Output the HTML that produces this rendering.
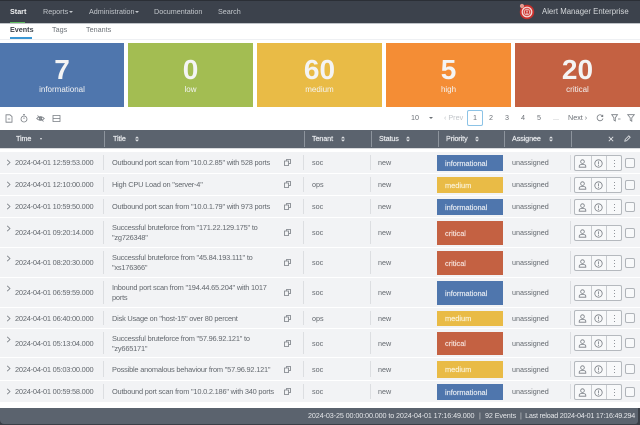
<!DOCTYPE html>
<html><head><meta charset="utf-8"><style>
*{box-sizing:border-box}
html,body{margin:0;padding:0;width:640px;height:425px;overflow:hidden;background:#fff;font-family:"Liberation Sans",sans-serif}
.a{position:absolute;white-space:nowrap}
#nav{left:0;top:0;width:640px;height:23px;background:#3c424c;border-top:1px solid #2b2f36}
.n{top:7px;font-size:7.2px;line-height:9px;color:#c3c7cc}
.t{top:25px;font-size:7.2px;line-height:10px;color:#6d7278}
.tile{top:43px;height:64px;color:#f4f4f4;text-align:center}
.tile b{position:absolute;left:0;right:0;top:12px;font-size:28px;line-height:30px;font-weight:bold}
.tile span{position:absolute;left:0;right:0;top:42px;font-size:8px;line-height:10px}
.p{top:113px;font-size:7.2px;line-height:10px;color:#6c7177}
.h{top:134px;font-size:7.2px;line-height:10px;color:#e9ebee;letter-spacing:-.1px;-webkit-text-stroke:.2px #e9ebee}
.hd{top:131px;width:1px;height:16px;background:#8d949d}
.r{position:absolute;left:0;width:640px;background:#f2f3f5;font-size:7.4px;color:#63686e}
.c{position:absolute;top:1px;bottom:0;display:flex;align-items:center;line-height:10px;white-space:nowrap;letter-spacing:-.2px}
.c:nth-child(n+7){font-size:7.2px;letter-spacing:0}
.d{position:absolute;top:3px;bottom:3px;width:1px;background:#dcdee1}
.pr{position:absolute;left:437px;width:66px;top:3px;bottom:2px;color:#e6ebf2;display:flex;align-items:center;padding-left:8px;font-size:7.4px;-webkit-text-stroke:.15px currentColor}
.inf{background:#4f76ad}.med{background:#e9bb46;color:#fbf3da}.cri{background:#c46142;color:#f6e3dc}
.btn{position:absolute;left:574px;width:48px;height:16px;top:50%;margin-top:-8px;border:1px solid #b5b9be;border-radius:2px;background:#f8f9fa}
.btn i{position:absolute;top:0;bottom:0;width:1px;background:#c8cbcf}
.btn svg{position:absolute;top:3px;width:9px;height:9px}
.cb{position:absolute;left:625px;width:10px;height:10px;top:50%;margin-top:-5px;border:1px solid #b0b4b9;border-radius:2px;background:#f8f9fa}
.ch{position:absolute;left:6px;width:5px;height:7px}
.cp{position:absolute;left:284px;width:7px;height:7px;top:50%;margin-top:-3.5px}
svg{display:block;overflow:visible;fill:none;stroke:#777c82;stroke-width:.8}
</style></head><body>
<svg width="0" height="0" style="position:absolute"><defs>
<symbol id="chev" viewBox="0 0 5 7"><path d="M1.2 .8 4 3.5 1.2 6.2"/></symbol>
<symbol id="copy" viewBox="0 0 7 7"><path d="M2.5 1.5V.5H6.5V4.5H5M.5 2H4.5V6.5H.5Z"/></symbol>
<symbol id="user" viewBox="0 0 9 9"><circle cx="4.5" cy="2.6" r="1.8"/><path d="M1.2 8.2V7.2Q1.2 5.8 3 5.6H6Q7.8 5.8 7.8 7.2V8.2Z"/></symbol>
<symbol id="info" viewBox="0 0 9 9"><circle cx="4.5" cy="4.5" r="3.7"/><path d="M4.5 2.4V5.4M4.5 6V6.9"/></symbol>
<symbol id="dots" viewBox="0 0 9 9"><path d="M4.5 1V2M4.5 4V5M4.5 7V8"/></symbol>
</defs></svg>

<div class="a" id="nav"></div>
<div class="a" style="left:0;top:23px;width:640px;height:1px;background:#bfc3c8"></div>
<div class="a n" style="left:10px;color:#f2f3f4;font-weight:bold">Start</div>
<div class="a" style="left:10px;top:22px;width:15px;height:1px;background:#5cb85c"></div>
<div class="a n" style="left:43px">Reports</div><div class="a" style="left:69px;top:11px;border:2px solid transparent;border-top:2.5px solid #c3c7cc;border-bottom:0"></div>
<div class="a n" style="left:89px">Administration</div><div class="a" style="left:135px;top:11px;border:2px solid transparent;border-top:2.5px solid #c3c7cc;border-bottom:0"></div>
<div class="a n" style="left:154px">Documentation</div>
<div class="a n" style="left:218px">Search</div>
<svg class="a" style="left:519px;top:4px;stroke:none" width="16" height="16" viewBox="0 0 16 16"><circle cx="8" cy="8" r="7.2" fill="#c9302c"/><circle cx="8" cy="8" r="5.4" fill="#f4dcda"/><circle cx="8" cy="8" r="4.2" fill="#d9534f"/><circle cx="8" cy="8" r="3" fill="#f4dcda"/><circle cx="8" cy="8" r="2.3" fill="#c9302c"/><rect x="7.5" y="6.4" width="1" height="2.2" fill="#fff"/><rect x="7.5" y="9" width="1" height=".9" fill="#fff"/><circle cx="3" cy="2" r="2.1" fill="#e39a90"/></svg>
<div class="a n" style="left:542px;top:7px;font-size:7.8px;color:#d6d9dc">Alert Manager Enterprise</div>

<div class="a t" style="left:10px;color:#3e444c;font-weight:bold">Events</div>
<div class="a" style="left:10px;top:37px;width:22px;height:2px;background:#3a97d4"></div>
<div class="a t" style="left:52px">Tags</div>
<div class="a t" style="left:86px">Tenants</div>
<div class="a" style="left:0;top:39px;width:640px;height:1px;background:#eef0f3"></div>

<div class="a tile" style="left:0;width:124px;background:#4f76ad"><b>7</b><span>informational</span></div>
<div class="a tile" style="left:128px;width:125px;background:#a3bd52"><b>0</b><span>low</span></div>
<div class="a tile" style="left:257px;width:125px;background:#e9bb46"><b>60</b><span>medium</span></div>
<div class="a tile" style="left:386px;width:125px;background:#f48d35"><b>5</b><span>high</span></div>
<div class="a tile" style="left:515px;width:125px;background:#c46142"><b>20</b><span>critical</span></div>

<svg class="a" style="left:5px;top:114px" width="8" height="9" viewBox="0 0 8 9"><path d="M1 .8H5L7 2.6V8.2H1ZM2.8 5H5.2"/></svg>
<svg class="a" style="left:20px;top:114px" width="8" height="9" viewBox="0 0 8 9"><circle cx="4" cy="5" r="3"/><path d="M4 3.5V5M3 .7H5"/></svg>
<svg class="a" style="left:36px;top:114px" width="9" height="9" viewBox="0 0 9 9"><path d="M.7 4.5Q4.5 .8 8.3 4.5 4.5 8.2 .7 4.5ZM1.5 1.5 7.5 7.5"/><circle cx="4.5" cy="4.5" r="1.2"/></svg>
<svg class="a" style="left:52px;top:114px" width="9" height="9" viewBox="0 0 9 9"><path d="M1 1.5H8V7.5H1ZM1 4.5H8"/></svg>

<div class="a p" style="left:411px">10</div>
<div class="a" style="left:429px;top:117px;border:2px solid transparent;border-top:2.5px solid #6c7177;border-bottom:0"></div>
<div class="a p" style="left:444px;color:#c0c4c8">‹ Prev</div>
<div class="a" style="left:467px;top:110px;width:16px;height:16px;border:1px solid #8cc3e6;border-radius:2px"></div>
<div class="a p" style="left:473px">1</div>
<div class="a p" style="left:489px">2</div>
<div class="a p" style="left:505px">3</div>
<div class="a p" style="left:521px">4</div>
<div class="a p" style="left:537px">5</div>
<div class="a p" style="left:553px;color:#a4a8ad">...</div>
<div class="a p" style="left:568px">Next ›</div>
<svg class="a" style="left:596px;top:114px" width="8" height="8" viewBox="0 0 8 8"><path d="M6.8 2.5A3 3 0 1 0 7 4.5M6.8 .8V2.6H5"/></svg>
<svg class="a" style="left:611px;top:114px" width="10" height="8" viewBox="0 0 10 8"><path d="M.7 .7H6.5L4.3 3.8V7L2.9 6V3.8ZM7 5H9.5"/></svg>
<svg class="a" style="left:627px;top:114px" width="8" height="8" viewBox="0 0 8 8"><path d="M.7 .7H7.3L4.8 3.8V7.3L3.2 6.2V3.8Z"/></svg>

<div class="a" style="left:0;top:130px;width:640px;height:18px;background:#5b636e"></div>
<div class="a" style="left:0;top:148px;width:640px;height:1px;background:#d9dbde"></div>
<div class="a h" style="left:16px">Time</div><div class="a" style="left:40px;top:138px;border:1.5px solid transparent;border-top:2px solid #e4e6e9;border-bottom:0"></div>
<div class="a h" style="left:113px">Title</div>
<div class="a h" style="left:312px">Tenant</div>
<div class="a h" style="left:379px">Status</div>
<div class="a h" style="left:446px">Priority</div>
<div class="a h" style="left:512px">Assignee</div>
<svg class="a" style="left:135px;top:136px" width="4" height="6" viewBox="0 0 4 6"><path d="M0 2.4 2 .4 4 2.4ZM0 3.6 2 5.6 4 3.6Z" fill="#e4e6e9" stroke="none"/></svg>
<svg class="a" style="left:341px;top:136px" width="4" height="6" viewBox="0 0 4 6"><path d="M0 2.4 2 .4 4 2.4ZM0 3.6 2 5.6 4 3.6Z" fill="#e4e6e9" stroke="none"/></svg>
<svg class="a" style="left:406px;top:136px" width="4" height="6" viewBox="0 0 4 6"><path d="M0 2.4 2 .4 4 2.4ZM0 3.6 2 5.6 4 3.6Z" fill="#e4e6e9" stroke="none"/></svg>
<svg class="a" style="left:475px;top:136px" width="4" height="6" viewBox="0 0 4 6"><path d="M0 2.4 2 .4 4 2.4ZM0 3.6 2 5.6 4 3.6Z" fill="#e4e6e9" stroke="none"/></svg>
<svg class="a" style="left:549px;top:136px" width="4" height="6" viewBox="0 0 4 6"><path d="M0 2.4 2 .4 4 2.4ZM0 3.6 2 5.6 4 3.6Z" fill="#e4e6e9" stroke="none"/></svg>
<div class="a hd" style="left:104px"></div><div class="a hd" style="left:304px"></div><div class="a hd" style="left:371px"></div><div class="a hd" style="left:438px"></div><div class="a hd" style="left:504px"></div><div class="a hd" style="left:571px"></div>
<svg class="a" style="left:608px;top:136px;stroke:#e4e6e9" width="6" height="6" viewBox="0 0 6 6"><path d="M.8 .8 5.2 5.2M5.2 .8 .8 5.2"/></svg>
<svg class="a" style="left:624px;top:135px;stroke:#e4e6e9" width="7" height="7" viewBox="0 0 7 7"><path d="M.8 6.2 1.2 4.4 4.8 .8 6.2 2.2 2.6 5.8Z"/></svg>

<div class="r" style="top:152px;height:21px"><svg class="ch" style="top:7px"><use href="#chev"/></svg><div class="c" style="left:15px">2024-04-01 12:59:53.000</div><div class="d" style="left:103px"></div><div class="c" style="left:112px">Outbound port scan from "10.0.2.85" with 528 ports</div><svg class="cp"><use href="#copy"/></svg><div class="d" style="left:303px"></div><div class="c" style="left:312px">soc</div><div class="d" style="left:370px"></div><div class="c" style="left:378px">new</div><div class="pr inf">informational</div><div class="c" style="left:512px">unassigned</div><div class="d" style="left:570px"></div><div class="btn"><i style="left:16px"></i><i style="left:31px"></i><svg style="left:2.5px"><use href="#user"/></svg><svg style="left:18.5px"><use href="#info"/></svg><svg style="left:34.5px"><use href="#dots"/></svg></div><div class="cb"></div></div>

<div class="r" style="top:174px;height:21px"><svg class="ch" style="top:7px"><use href="#chev"/></svg><div class="c" style="left:15px">2024-04-01 12:10:00.000</div><div class="d" style="left:103px"></div><div class="c" style="left:112px">High CPU Load on "server-4"</div><svg class="cp"><use href="#copy"/></svg><div class="d" style="left:303px"></div><div class="c" style="left:312px">ops</div><div class="d" style="left:370px"></div><div class="c" style="left:378px">new</div><div class="pr med">medium</div><div class="c" style="left:512px">unassigned</div><div class="d" style="left:570px"></div><div class="btn"><i style="left:16px"></i><i style="left:31px"></i><svg style="left:2.5px"><use href="#user"/></svg><svg style="left:18.5px"><use href="#info"/></svg><svg style="left:34.5px"><use href="#dots"/></svg></div><div class="cb"></div></div>

<div class="r" style="top:196px;height:21px"><svg class="ch" style="top:7px"><use href="#chev"/></svg><div class="c" style="left:15px">2024-04-01 10:59:50.000</div><div class="d" style="left:103px"></div><div class="c" style="left:112px">Outbound port scan from "10.0.1.79" with 973 ports</div><svg class="cp"><use href="#copy"/></svg><div class="d" style="left:303px"></div><div class="c" style="left:312px">soc</div><div class="d" style="left:370px"></div><div class="c" style="left:378px">new</div><div class="pr inf">informational</div><div class="c" style="left:512px">unassigned</div><div class="d" style="left:570px"></div><div class="btn"><i style="left:16px"></i><i style="left:31px"></i><svg style="left:2.5px"><use href="#user"/></svg><svg style="left:18.5px"><use href="#info"/></svg><svg style="left:34.5px"><use href="#dots"/></svg></div><div class="cb"></div></div>

<div class="r" style="top:218px;height:29px"><svg class="ch" style="top:7px"><use href="#chev"/></svg><div class="c" style="left:15px">2024-04-01 09:20:14.000</div><div class="d" style="left:103px"></div><div class="c" style="left:112px">Successful bruteforce from "171.22.129.175" to<br>"zg726348"</div><svg class="cp"><use href="#copy"/></svg><div class="d" style="left:303px"></div><div class="c" style="left:312px">soc</div><div class="d" style="left:370px"></div><div class="c" style="left:378px">new</div><div class="pr cri">critical</div><div class="c" style="left:512px">unassigned</div><div class="d" style="left:570px"></div><div class="btn"><i style="left:16px"></i><i style="left:31px"></i><svg style="left:2.5px"><use href="#user"/></svg><svg style="left:18.5px"><use href="#info"/></svg><svg style="left:34.5px"><use href="#dots"/></svg></div><div class="cb"></div></div>

<div class="r" style="top:248px;height:29px"><svg class="ch" style="top:7px"><use href="#chev"/></svg><div class="c" style="left:15px">2024-04-01 08:20:30.000</div><div class="d" style="left:103px"></div><div class="c" style="left:112px">Successful bruteforce from "45.84.193.111" to<br>"xs176366"</div><svg class="cp"><use href="#copy"/></svg><div class="d" style="left:303px"></div><div class="c" style="left:312px">soc</div><div class="d" style="left:370px"></div><div class="c" style="left:378px">new</div><div class="pr cri">critical</div><div class="c" style="left:512px">unassigned</div><div class="d" style="left:570px"></div><div class="btn"><i style="left:16px"></i><i style="left:31px"></i><svg style="left:2.5px"><use href="#user"/></svg><svg style="left:18.5px"><use href="#info"/></svg><svg style="left:34.5px"><use href="#dots"/></svg></div><div class="cb"></div></div>

<div class="r" style="top:278px;height:29px"><svg class="ch" style="top:7px"><use href="#chev"/></svg><div class="c" style="left:15px">2024-04-01 06:59:59.000</div><div class="d" style="left:103px"></div><div class="c" style="left:112px">Inbound port scan from "194.44.65.204" with 1017<br>ports</div><svg class="cp"><use href="#copy"/></svg><div class="d" style="left:303px"></div><div class="c" style="left:312px">soc</div><div class="d" style="left:370px"></div><div class="c" style="left:378px">new</div><div class="pr inf">informational</div><div class="c" style="left:512px">unassigned</div><div class="d" style="left:570px"></div><div class="btn"><i style="left:16px"></i><i style="left:31px"></i><svg style="left:2.5px"><use href="#user"/></svg><svg style="left:18.5px"><use href="#info"/></svg><svg style="left:34.5px"><use href="#dots"/></svg></div><div class="cb"></div></div>

<div class="r" style="top:308px;height:20px"><svg class="ch" style="top:7px"><use href="#chev"/></svg><div class="c" style="left:15px">2024-04-01 06:40:00.000</div><div class="d" style="left:103px"></div><div class="c" style="left:112px">Disk Usage on "host-15" over 80 percent</div><svg class="cp"><use href="#copy"/></svg><div class="d" style="left:303px"></div><div class="c" style="left:312px">ops</div><div class="d" style="left:370px"></div><div class="c" style="left:378px">new</div><div class="pr med">medium</div><div class="c" style="left:512px">unassigned</div><div class="d" style="left:570px"></div><div class="btn"><i style="left:16px"></i><i style="left:31px"></i><svg style="left:2.5px"><use href="#user"/></svg><svg style="left:18.5px"><use href="#info"/></svg><svg style="left:34.5px"><use href="#dots"/></svg></div><div class="cb"></div></div>

<div class="r" style="top:329px;height:28px"><svg class="ch" style="top:7px"><use href="#chev"/></svg><div class="c" style="left:15px">2024-04-01 05:13:04.000</div><div class="d" style="left:103px"></div><div class="c" style="left:112px">Successful bruteforce from "57.96.92.121" to<br>"zy665171"</div><svg class="cp"><use href="#copy"/></svg><div class="d" style="left:303px"></div><div class="c" style="left:312px">soc</div><div class="d" style="left:370px"></div><div class="c" style="left:378px">new</div><div class="pr cri">critical</div><div class="c" style="left:512px">unassigned</div><div class="d" style="left:570px"></div><div class="btn"><i style="left:16px"></i><i style="left:31px"></i><svg style="left:2.5px"><use href="#user"/></svg><svg style="left:18.5px"><use href="#info"/></svg><svg style="left:34.5px"><use href="#dots"/></svg></div><div class="cb"></div></div>

<div class="r" style="top:358px;height:22px"><svg class="ch" style="top:7px"><use href="#chev"/></svg><div class="c" style="left:15px">2024-04-01 05:03:00.000</div><div class="d" style="left:103px"></div><div class="c" style="left:112px">Possible anomalous behaviour from "57.96.92.121"</div><svg class="cp"><use href="#copy"/></svg><div class="d" style="left:303px"></div><div class="c" style="left:312px">soc</div><div class="d" style="left:370px"></div><div class="c" style="left:378px">new</div><div class="pr med">medium</div><div class="c" style="left:512px">unassigned</div><div class="d" style="left:570px"></div><div class="btn"><i style="left:16px"></i><i style="left:31px"></i><svg style="left:2.5px"><use href="#user"/></svg><svg style="left:18.5px"><use href="#info"/></svg><svg style="left:34.5px"><use href="#dots"/></svg></div><div class="cb"></div></div>

<div class="r" style="top:381px;height:21px"><svg class="ch" style="top:7px"><use href="#chev"/></svg><div class="c" style="left:15px">2024-04-01 00:59:58.000</div><div class="d" style="left:103px"></div><div class="c" style="left:112px">Outbound port scan from "10.0.2.186" with 340 ports</div><svg class="cp"><use href="#copy"/></svg><div class="d" style="left:303px"></div><div class="c" style="left:312px">soc</div><div class="d" style="left:370px"></div><div class="c" style="left:378px">new</div><div class="pr inf">informational</div><div class="c" style="left:512px">unassigned</div><div class="d" style="left:570px"></div><div class="btn"><i style="left:16px"></i><i style="left:31px"></i><svg style="left:2.5px"><use href="#user"/></svg><svg style="left:18.5px"><use href="#info"/></svg><svg style="left:34.5px"><use href="#dots"/></svg></div><div class="cb"></div></div>

<div class="a" style="left:0;top:408px;width:640px;height:17px;background:#3a3f47"></div>
<div class="a" style="left:0;top:408px;width:638px;height:16px;background:#5b636e;border-radius:0 0 3px 4px"></div>
<div class="a f" style="left:308px;top:411px;font-size:7.2px;line-height:10px;color:#e4e6e9;letter-spacing:-.1px">2024-03-25 00:00:00.000 to 2024-04-01 17:16:49.000</div>
<div class="a" style="left:479px;top:411px;font-size:7.2px;line-height:10px;color:#c9ccd0">|</div>
<div class="a" style="left:485px;top:411px;font-size:7.2px;line-height:10px;color:#e4e6e9;letter-spacing:-.1px">92 Events</div>
<div class="a" style="left:520px;top:411px;font-size:7.2px;line-height:10px;color:#c9ccd0">|</div>
<div class="a" style="right:5px;top:411px;font-size:7.2px;line-height:10px;color:#e4e6e9;letter-spacing:-.24px">Last reload 2024-04-01 17:16:49.294</div>
</body></html>
